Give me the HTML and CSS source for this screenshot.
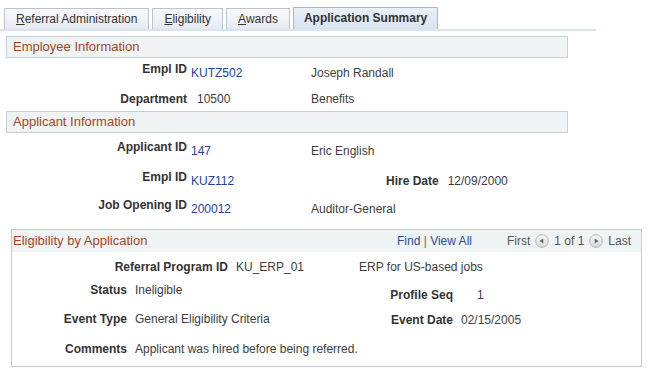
FILE: index.html
```html
<!DOCTYPE html>
<html lang="en">
  <head>
    <meta charset="UTF-8">
    <title>Application Summary</title>
    <link rel="stylesheet" href="styles.css">
  </head>
  <body>
    <div class="tabs">
      <div class="tab"><u>R</u>eferral Administration</div>
      <div class="tab"><u>E</u>ligibility</div>
      <div class="tab"><u>A</u>wards</div>
      <div class="tab active">Application Summary</div>
    </div>

    <div class="section-head">Employee Information</div>
    <div class="fields">
      <div class="row h30">
        <span class="lbl">Empl ID</span>
        <span class="val link">KUTZ502</span>
        <span class="desc low">Joseph Randall</span>
      </div>
      <div class="row h19">
        <span class="lbl">Department</span>
        <span class="val plain">10500</span>
        <span class="desc">Benefits</span>
      </div>
    </div>

    <div class="section-head">Applicant Information</div>
    <div class="fields app">
      <div class="row h30">
        <span class="lbl">Applicant ID</span>
        <span class="val link">147</span>
        <span class="desc low">Eric English</span>
      </div>
      <div class="row h28">
        <span class="lbl">Empl ID</span>
        <span class="val link">KUZ112</span>
        <span class="hire low"><b>Hire Date</b><span class="hire-val">12/09/2000</span></span>
      </div>
      <div class="row h31">
        <span class="lbl">Job Opening ID</span>
        <span class="val link">200012</span>
        <span class="desc low">Auditor-General</span>
      </div>
    </div>

    <div class="box">
      <div class="box-head">
        <span class="box-title">Eligibility by Application</span>
        <span class="nav-links"><a>Find</a> <span class="sep">|</span> <a>View All</a></span>
        <span class="pager">
          First
          <svg class="arrow" width="14" height="14" viewBox="0 0 14 14">
            <defs>
              <linearGradient id="g1" x1="0" y1="0" x2="0" y2="1">
                <stop offset="0" stop-color="#fbfbfb"/>
                <stop offset="1" stop-color="#d6d6d6"/>
              </linearGradient>
            </defs>
            <circle cx="7" cy="7" r="6.3" fill="url(#g1)" stroke="#b5b5b5"/>
            <path d="M4.5 7 L8.3 4.4 L8.3 9.6 Z" fill="#666"/>
          </svg>
          1 of 1
          <svg class="arrow" width="14" height="14" viewBox="0 0 14 14">
            <circle cx="7" cy="7" r="6.3" fill="url(#g1)" stroke="#b5b5b5"/>
            <path d="M9.5 7 L5.7 4.4 L5.7 9.6 Z" fill="#666"/>
          </svg>
          Last
        </span>
      </div>
      <div class="box-fields">
        <div class="row b23">
          <span class="blbl wide">Referral Program ID</span>
          <span class="bval erp">KU_ERP_01</span>
          <span class="bval">ERP for US-based jobs</span>
        </div>
        <div class="row b29">
          <span class="blbl">Status</span>
          <span class="bval mid">Ineligible</span>
          <span class="rpart down5"><span class="rlbl">Profile Seq</span><span class="bval seq">1</span></span>
        </div>
        <div class="row b30">
          <span class="blbl">Event Type</span>
          <span class="bval mid">General Eligibility Criteria</span>
          <span class="rpart down1"><span class="rlbl">Event Date</span><span class="bval date">02/15/2005</span></span>
        </div>
        <div class="row b25">
          <span class="blbl">Comments</span>
          <span class="bval">Applicant was hired before being referred.</span>
        </div>
      </div>
    </div>
  </body>
</html>
```

FILE: styles.css
```css
body {
  margin: 0;
  font-family: "Liberation Sans", Arial, sans-serif;
  font-size: 12px;
  line-height: 14px;
  color: #333333;
  background-color: #ffffff;
}
.tabs {
  display: flex;
  align-items: flex-end;
  width: 592px;
  padding: 7px 0 0 4px;
  gap: 2px;
  border-bottom: 2px solid #d9e3f0;
}
.tab {
  height: 20px;
  line-height: 20px;
  padding: 0 11px;
  margin-right: 1px;
  border: 1px solid #b9c3cf;
  border-bottom: none;
  background: linear-gradient(#f8f9fb, #e6ebf1);
  color: #333333;
}
.tab u {
  text-decoration: underline;
}
.tab.active {
  height: 21px;
  font-weight: bold;
  padding: 0 10px;
  border-color: #aab6c6;
  background: linear-gradient(#eaf0f8, #d9e3f0);
  color: #333333;
}
.section-head {
  margin: 5px 0 0 6px;
  width: 554px;
  height: 20px;
  line-height: 20px;
  padding-left: 6px;
  border: 1px solid #c9cfd4;
  background-color: #eff3f3;
  color: #a5461e;
  font-size: 13px;
}
.fields {
  padding-top: 4px;
}
.fields.app {
  padding-top: 7px;
}
.section-head + .fields + .section-head {
  margin-top: 0;
}
.row {
  display: flex;
  align-items: flex-start;
}
.h30 { height: 30px; }
.h28 { height: 28px; }
.h31 { height: 31px; }
.h19 { height: 19px; }
.lbl {
  width: 187px;
  text-align: right;
  font-weight: bold;
  color: #333333;
}
.val {
  width: 120px;
  margin-left: 4px;
}
.val.link {
  padding-top: 4px;
  color: #22449b;
}
.val.plain {
  width: 114px;
  padding-left: 6px;
  color: #3d3d3d;
}
.desc {
  color: #3d3d3d;
}
.low {
  padding-top: 4px;
}
.hire {
  padding-left: 75px;
}
.hire b {
  color: #333333;
}
.hire-val {
  margin-left: 9px;
  color: #3d3d3d;
}
.box {
  margin-left: 11px;
  width: 629px;
  height: 136px;
  border: 1px solid #c9c9c9;
}
.box-head {
  display: flex;
  align-items: center;
  height: 22px;
  padding-left: 1px;
  background-color: #eff3f3;
}
.box-title {
  width: 384px;
  color: #a5461e;
  font-size: 13px;
}
.nav-links {
  width: 110px;
}
.nav-links a {
  color: #2a4d9c;
}
.sep {
  color: #a5461e;
}
.pager {
  display: flex;
  align-items: center;
  gap: 5px;
  color: #555555;
}
.arrow {
  display: block;
}
.box-fields {
  padding-top: 8px;
}
.b23 { height: 23px; }
.b29 { height: 29px; }
.b30 { height: 30px; }
.b25 { height: 25px; }
.blbl {
  width: 115px;
  text-align: right;
  font-weight: bold;
}
.blbl.wide {
  width: 216px;
}
.bval {
  margin-left: 8px;
  color: #3d3d3d;
}
.bval.erp {
  width: 115px;
}
.bval.mid {
  width: 245px;
}
.rpart {
  display: flex;
}
.down5 {
  padding-top: 5px;
}
.down1 {
  padding-top: 1px;
}
.rlbl {
  width: 73px;
  text-align: right;
  font-weight: bold;
}
.bval.seq {
  margin-left: 24px;
}
```
